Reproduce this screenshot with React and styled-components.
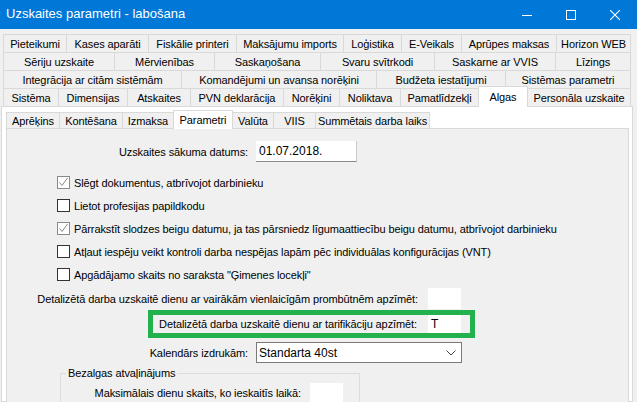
import React from 'react';
import styled, { createGlobalStyle } from 'styled-components';

const FONT = '"Liberation Sans", Arial, sans-serif';

const Global = createGlobalStyle`
  html, body { margin: 0; padding: 0; background: #f0f0f0; }
  body { font-family: ${FONT}; font-size: 11px; letter-spacing: -0.1px; color: #000; }
  * { box-sizing: border-box; }
`;

const Window = styled.div`
  width: 637px;
  height: 402px;
  overflow: hidden;
  display: flex;
  flex-direction: column;
  background: #f0f0f0;
`;

const TitleBar = styled.div`
  height: 29px;
  flex: none;
  background: #0078d7;
  color: #fff;
  display: flex;
  align-items: center;
`;

const Title = styled.div`
  flex: 1;
  padding-left: 6px;
  font-size: 13px;
  letter-spacing: 0;
  line-height: 20px;
  margin-top: -1px;
`;

const Controls = styled.div`
  display: flex;
  height: 100%;
`;

const CtrlBtn = styled.div`
  width: 44px;
  height: 100%;
  display: flex;
  align-items: center;
  justify-content: center;
`;

const TabControl = styled.div`
  margin-left: 1px;
  width: 632px;
  flex: 1;
  display: flex;
  flex-direction: column;
  padding-top: 5px;
  min-height: 0;
`;

const TabRow = styled.div`
  display: flex;
  align-items: flex-end;
  height: ${p => p.$h || 18}px;
  padding-left: ${p => p.$pl ?? 2}px;
  flex: none;
`;

const Tab = styled.div`
  width: ${p => p.$w}px;
  flex: none;
  height: ${p => (p.$th ? `${p.$th}px` : '100%')};
  border-top: 1px solid #d9d9d9;
  border-left: 1px solid #d9d9d9;
  background: #f0f0f0;
  display: flex;
  align-items: center;
  justify-content: center;
  white-space: nowrap;
  padding-top: ${p => p.$pt || 0}px;
  &:last-child { border-right: 1px solid #d9d9d9; }
`;

const ActiveTab = styled(Tab)`
  position: relative;
  z-index: 1;
  background: #fff;
  height: ${p => p.$th}px;
  margin-bottom: -1px;
  border-right: 1px solid #d9d9d9;
  padding-top: 0;
  padding-bottom: 1px;
  & + div { border-left: none; }
`;

const Page = styled.div`
  flex: 1;
  border: 1px solid #d9d9d9;
  background: #fff;
  padding: 3px 3px 0 4px;
  display: flex;
  flex-direction: column;
  min-height: 0;
`;

const InnerPage = styled.div`
  flex: 1;
  border: 1px solid #d9d9d9;
  background: #f0f0f0;
  display: flex;
  flex-direction: column;
  padding-top: 12px;
`;

const FieldRow = styled.div`
  display: flex;
  align-items: center;
  gap: ${p => p.$gap || 8}px;
  margin-top: ${p => p.$mt || 0}px;
  flex: none;
`;

const Label = styled.div`
  width: ${p => p.$w}px;
  text-align: right;
  white-space: nowrap;
  flex: none;
`;

const TextBox = styled.div`
  width: ${p => p.$w}px;
  height: ${p => p.$h || 21}px;
  background: #fff;
  border-bottom: ${p => (p.$framed ? '1px solid #8c8c8c' : 'none')};
  border-right: ${p => (p.$framed ? '1px solid #c8c8c8' : 'none')};
  display: flex;
  align-items: center;
  padding-left: 3px;
  flex: none;
  white-space: nowrap;
  font-size: 12px;
  letter-spacing: 0;
`;

const Select = styled.div`
  width: ${p => p.$w}px;
  height: 21px;
  background: #fff;
  border: 1px solid #7a7a7a;
  display: flex;
  align-items: center;
  justify-content: space-between;
  padding: 0 5px 0 2px;
  flex: none;
  font-size: 12px;
  letter-spacing: 0;
`;

const CheckList = styled.div`
  display: flex;
  flex-direction: column;
  margin: 9px 0 0 50px;
`;

const CheckRow = styled.div`
  height: 23px;
  display: flex;
  align-items: center;
  gap: 4px;
  white-space: nowrap;
`;

const Box = styled.div`
  width: 13px;
  height: 13px;
  flex: none;
  background: #fff;
  border: 1px solid ${p => (p.$checked ? '#8a8a8a' : '#333')};
  display: flex;
  align-items: center;
  justify-content: center;
`;

const Highlight = styled.div`
  display: flex;
  align-items: center;
  gap: 11px;
  margin-left: 141px;
  margin-top: 1px;
  height: 28px;
  width: 327px;
  border: 5px solid #22b14c;
  padding: 0 9px 0 5px;
  flex: none;
`;

const Group = styled.fieldset`
  margin: 3px 0 0 53px;
  width: 300px;
  border: 1px solid #dcdcdc;
  padding: 0 0 10px 0;
  min-width: 0;
  flex: none;
`;

const Legend = styled.legend`
  margin-left: 5px;
  padding: 0 2px;
  line-height: 14px;
`;

const rows = [
  [['Pieteikumi', 63], ['Kases aparāti', 82], ['Fiskālie printeri', 88], ['Maksājumu imports', 107], ['Loģistika', 58], ['E-Veikals', 60], ['Aprūpes maksas', 95], ['Horizon WEB', 75]],
  [['Sēriju uzskaite', 111], ['Mērvienības', 100], ['Saskaņošana', 106], ['Svaru svītrkodi', 114], ['Saskarne ar VVIS', 121], ['Līzings', 76]],
  [['Integrācija ar citām sistēmām', 178], ['Komandējumi un avansa norēķini', 195], ['Budžeta iestatījumi', 129], ['Sistēmas parametri', 126]],
  [['Sistēma', 55], ['Dimensijas', 69], ['Atskaites', 63], ['PVN deklarācija', 93], ['Norēķini', 56], ['Noliktava', 61], ['Pamatlīdzekļi', 78], ['Algas', 50, true], ['Personāla uzskaite', 103]],
];

const innerTabs = [
  ['Aprēķins', 53], ['Kontēšana', 63], ['Izmaksa', 51], ['Parametri', 60, true], ['Valūta', 40], ['VIIS', 42], ['Summētais darba laiks', 115],
];

const checks = [
  ['Slēgt dokumentus, atbrīvojot darbinieku', true],
  ['Lietot profesijas papildkodu', false],
  ['Pārrakstīt slodzes beigu datumu, ja tas pārsniedz līgumaattiecību beigu datumu, atbrīvojot darbinieku', true],
  ['Atļaut iespēju veikt kontroli darba nespējas lapām pēc individuālas konfigurācijas (VNT)', false],
  ['Apgādājamo skaits no saraksta "Ģimenes locekļi"', false],
];

const Check = () => (
  <svg width="11" height="11" viewBox="0 0 11 11">
    <polyline points="1.5,5.5 4,8.5 9.5,1" fill="none" stroke="#8a8a8a" strokeWidth="1" />
  </svg>
);

export default function App() {
  return (
    <>
      <Global />
      <Window>
        <TitleBar>
          <Title>Uzskaites parametri - labošana</Title>
          <Controls>
            <CtrlBtn>
              <svg width="10" height="10" viewBox="0 0 10 10"><line x1="0" y1="5.5" x2="10" y2="5.5" stroke="#fff" strokeWidth="1" /></svg>
            </CtrlBtn>
            <CtrlBtn>
              <svg width="10" height="10" viewBox="0 0 10 10"><rect x="0.5" y="0.5" width="9" height="9" fill="none" stroke="#fff" strokeWidth="1" /></svg>
            </CtrlBtn>
            <CtrlBtn>
              <svg width="10" height="10" viewBox="0 0 10 10"><path d="M0 0 L10 10 M10 0 L0 10" stroke="#fff" strokeWidth="1.1" /></svg>
            </CtrlBtn>
          </Controls>
        </TitleBar>
        <TabControl>
          {rows.map((r, i) => (
            <TabRow key={i}>
              {r.map(([t, w, a]) => (a
                ? <ActiveTab key={t} $w={w} $th={21}>{t}</ActiveTab>
                : <Tab key={t} $w={w}>{t}</Tab>))}
            </TabRow>
          ))}
          <Page>
            <TabRow $pl={0}>
              {innerTabs.map(([t, w, a]) => (a
                ? <ActiveTab key={t} $w={w} $th={19}>{t}</ActiveTab>
                : <Tab key={t} $w={w} $th={16} $pt={1}>{t}</Tab>))}
            </TabRow>
            <InnerPage>
              <FieldRow>
                <Label $w={241}>Uzskaites sākuma datums:</Label>
                <TextBox $w={101} $framed>01.07.2018.</TextBox>
              </FieldRow>
              <CheckList>
                {checks.map(([t, c]) => (
                  <CheckRow key={t}>
                    <Box $checked={c}>{c && <Check />}</Box>
                    <span>{t}</span>
                  </CheckRow>
                ))}
              </CheckList>
              <FieldRow $gap={10} $mt={2}>
                <Label $w={411}>Detalizētā darba uzskaitē dienu ar vairākām vienlaicīgām prombūtnēm apzīmēt:</Label>
                <TextBox $w={33} />
              </FieldRow>
              <Highlight>
                <Label $w={259}>Detalizētā darba uzskaitē dienu ar tarifikāciju apzīmēt:</Label>
                <TextBox $w={33} $h={18}>T</TextBox>
              </Highlight>
              <FieldRow $mt={4}>
                <Label $w={241}>Kalendārs izdrukām:</Label>
                <Select $w={206}>
                  <span>Standarta 40st</span>
                  <svg width="10" height="6" viewBox="0 0 10 6"><polyline points="0.5,0.5 5,5 9.5,0.5" fill="none" stroke="#444" strokeWidth="1" /></svg>
                </Select>
              </FieldRow>
              <Group>
                <Legend>Bezalgas atvaļinājums</Legend>
                <FieldRow $gap={9} $mt={3}>
                  <Label $w={240}>Maksimālais dienu skaits, ko ieskaitīs laikā:</Label>
                  <TextBox $w={33} $h={20} />
                </FieldRow>
              </Group>
            </InnerPage>
          </Page>
        </TabControl>
      </Window>
    </>
  );
}
